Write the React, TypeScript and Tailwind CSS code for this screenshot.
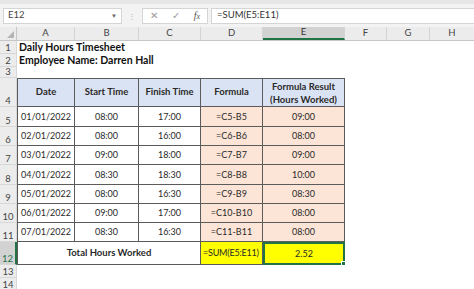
import { ReactNode } from "react";

type Row = {
  n: string;
  h: string;
  cells?: ReactNode;
  active?: boolean;
};

const cols = ["A", "B", "C", "D", "E", "F", "G", "H"];

const data = [
  ["01/01/2022", "08:00", "17:00", "=C5-B5", "09:00"],
  ["02/01/2022", "08:00", "16:00", "=C6-B6", "08:00"],
  ["03/01/2022", "09:00", "18:00", "=C7-B7", "09:00"],
  ["04/01/2022", "08:30", "18:30", "=C8-B8", "10:00"],
  ["05/01/2022", "08:00", "16:30", "=C9-B9", "08:30"],
  ["06/01/2022", "09:00", "17:00", "=C10-B10", "08:00"],
  ["07/01/2022", "08:30", "16:30", "=C11-B11", "08:00"],
];

const dataHeights = ["h-[20px]", "h-[19px]", "h-[19px]", "h-[20px]", "h-[19px]", "h-[19px]", "h-[19px]"];

const Blank = () => (
  <>
    <div className="w-[42px]" />
    <div className="w-[43px]" />
    <div className="flex-1" />
  </>
);

const cell = "flex items-center justify-center border-r border-b border-[#5b5b5b] text-[#2a2a2a]";
const head = "bg-[#dae3f3] font-bold text-[9.5px]";

const App = () => {
  const rows: Row[] = [
    {
      n: "1",
      h: "h-[13px]",
      cells: <div className="pl-[2px] text-[10.5px] font-bold text-[#111] whitespace-nowrap leading-[13px]">Daily Hours Timesheet</div>,
    },
    {
      n: "2",
      h: "h-[13px]",
      cells: <div className="pl-[2px] text-[10.5px] font-bold text-[#111] whitespace-nowrap leading-[13px]">Employee Name: Darren Hall</div>,
    },
    { n: "3", h: "h-[11px]" },
    {
      n: "4",
      h: "h-[29px]",
      cells: (
        <>
          <div className={`${cell} ${head} w-[58px] border-l border-t`}>Date</div>
          <div className={`${cell} ${head} w-[64px] border-t`}>Start Time</div>
          <div className={`${cell} ${head} w-[62px] border-t`}>Finish Time</div>
          <div className={`${cell} ${head} w-[62px] border-t`}>Formula</div>
          <div className={`${cell} ${head} w-[82px] border-t flex-col leading-[13px] text-center`}>
            <span>Formula Result</span>
            <span>(Hours Worked)</span>
          </div>
          <Blank />
        </>
      ),
    },
    ...data.map((r, i) => ({
      n: String(i + 5),
      h: dataHeights[i],
      cells: (
        <>
          <div className={`${cell} w-[58px] border-l`}>{r[0]}</div>
          <div className={`${cell} w-[64px]`}>{r[1]}</div>
          <div className={`${cell} w-[62px]`}>{r[2]}</div>
          <div className={`${cell} w-[62px] bg-[#fce4d6]`}>{r[3]}</div>
          <div className={`${cell} w-[82px] bg-[#fce4d6]`}>{r[4]}</div>
          <Blank />
        </>
      ),
    })),
    {
      n: "12",
      h: "h-[23px]",
      active: true,
      cells: (
        <>
          <div className={`${cell} w-[184px] border-l text-[9.5px] font-bold`}>Total Hours Worked</div>
          <div className={`${cell} w-[62px] bg-[#ffff00] justify-start pl-[2px] tracking-[-0.2px] whitespace-nowrap`}>
            =SUM(E5:E11)
          </div>
          <div className="relative flex w-[82px] items-center justify-center border-[2px] border-[#217346] bg-[#ffff00] text-[#2a2a2a]">
            2.52
            <span className="absolute -bottom-[3px] -right-[3px] h-[5px] w-[5px] border border-white bg-[#217346]" />
          </div>
          <Blank />
        </>
      ),
    },
    { n: "13", h: "h-[13px]" },
    { n: "14", h: "h-[13px]" },
  ];

  return (
    <div className="h-[289px] w-[474px] overflow-hidden bg-white text-[9px] font-['Lato',sans-serif]">
      {/* formula bar */}
      <div className="h-[4px] bg-[#e6e6e6]" />
      <div className="flex h-[23px] items-center bg-[#f3f3f3] pl-[3px]">
        <div className="flex h-[16px] w-[119px] items-center justify-between border border-[#d4d4d4] bg-white px-[4px] text-[9.5px] text-[#444]">
          <span>E12</span>
          <span className="text-[6px] text-[#666]">▼</span>
        </div>
        <div className="flex w-[20px] justify-center text-[8px] text-[#b5b5b5]">⋮</div>
        <div className="flex h-[16px] w-[66px] items-center justify-around border border-[#d4d4d4] bg-white text-[#9a9a9a]">
          <span className="text-[10px]">✕</span>
          <span className="text-[10px]">✓</span>
          <span className="font-['Liberation_Serif',serif] text-[10px] italic text-[#555]">
            f<span className="text-[8px]">x</span>
          </span>
        </div>
        <div className="ml-[3px] flex h-[16px] flex-1 items-center border border-r-0 border-[#d4d4d4] bg-white pl-[5px] text-[9.5px] text-[#333]">
          =SUM(E5:E11)
        </div>
      </div>

      {/* column headers */}
      <div className="flex h-[14px] border-b border-[#c6c6c6] bg-[#ececec] text-[9.5px] text-[#444]">
        <div className="relative w-[17px] border-r border-[#c6c6c6]">
          <svg className="absolute bottom-[2px] right-[2px]" width="7" height="7" viewBox="0 0 7 7">
            <polygon points="7,0 7,7 0,7" fill="#b4b4b4" />
          </svg>
        </div>
        {cols.map((c, i) => (
          <div
            key={c}
            className={
              "flex items-center justify-center border-r border-[#d4d4d4] " +
              (c === "E" ? "w-[82px] border-b-2 border-b-[#217346] bg-[#d2d2d2] text-[#333] " : "") +
              (i === 0 ? "w-[58px] " : "") +
              (c === "B" ? "w-[64px] " : "") +
              (c === "C" || c === "D" ? "w-[62px] " : "") +
              (c === "F" ? "w-[42px] " : "") +
              (c === "G" ? "w-[43px] " : "") +
              (c === "H" ? "flex-1 border-r-0 " : "")
            }
          >
            {c}
          </div>
        ))}
      </div>

      {/* rows */}
      {rows.map((r) => (
        <div key={r.n} className={`flex ${r.h}`}>
          <div
            className={
              "flex w-[17px] shrink-0 items-end justify-center border-r border-b border-[#d8d8d8] pb-[1px] text-[9.5px] leading-none " +
              (r.active ? "border-r-2 border-r-[#217346] bg-[#d2d2d2] text-[#217346]" : "bg-[#ececec] text-[#444]")
            }
          >
            {r.n}
          </div>
          {r.cells}
        </div>
      ))}
    </div>
  );
};

export default App;
